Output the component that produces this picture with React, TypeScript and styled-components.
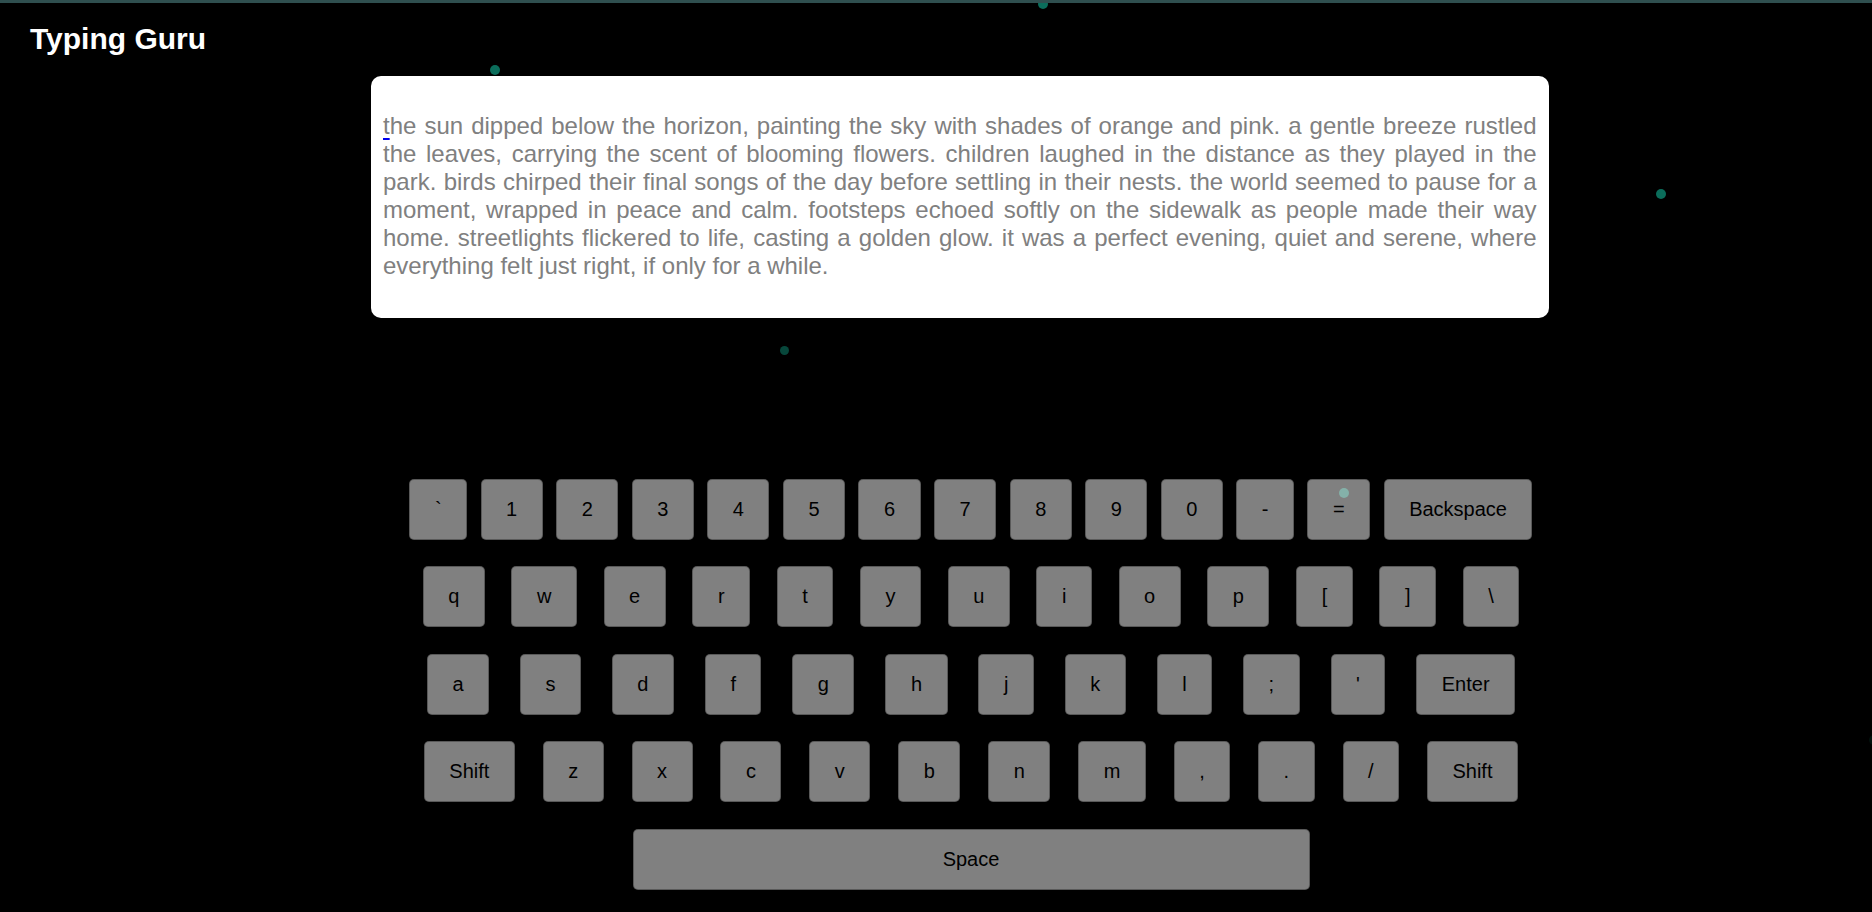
import React from "react";
import styled, { createGlobalStyle } from "styled-components";

const passage =
  "the sun dipped below the horizon, painting the sky with shades of orange and pink. a gentle breeze rustled the leaves, carrying the scent of blooming flowers. children laughed in the distance as they played in the park. birds chirped their final songs of the day before settling in their nests. the world seemed to pause for a moment, wrapped in peace and calm. footsteps echoed softly on the sidewalk as people made their way home. streetlights flickered to life, casting a golden glow. it was a perfect evening, quiet and serene, where everything felt just right, if only for a while.";

const rows: string[][] = [
  ["`", "1", "2", "3", "4", "5", "6", "7", "8", "9", "0", "-", "=", "Backspace"],
  ["q", "w", "e", "r", "t", "y", "u", "i", "o", "p", "[", "]", "\\"],
  ["a", "s", "d", "f", "g", "h", "j", "k", "l", ";", "'", "Enter"],
  ["Shift", "z", "x", "c", "v", "b", "n", "m", ",", ".", "/", "Shift"],
  ["Space"],
];

// background particles (x, y, size, opacity)
const particles = [
  { x: 495, y: 70, size: 10, op: 1 },
  { x: 1043, y: 4, size: 10, op: 1 },
  { x: 1661, y: 194, size: 10, op: 1 },
  { x: 784, y: 350, size: 9, op: 0.65 },
  { x: 1344, y: 493, size: 10, op: 0.9 },
  { x: 1874, y: 740, size: 10, op: 0.15 },
];

function App() {
  return (
    <Page>
      <GlobalStyle />
      <Particles>
        {particles.map((p, i) => (
          <Dot key={i} $x={p.x} $y={p.y} $size={p.size} $op={p.op} />
        ))}
      </Particles>
      <TopBar />
      <Header>
        <Title>Typing Guru</Title>
      </Header>
      <Main>
        <TextPanel>
          <Passage>
            <Cursor>{passage[0]}</Cursor>
            {passage.slice(1)}
          </Passage>
        </TextPanel>
        <Keyboard>
          {rows.map((row, r) => (
            <KeyRow key={r}>
              {row.map((k, i) => (
                <Key key={i} $space={k === "Space"}>
                  {k}
                </Key>
              ))}
            </KeyRow>
          ))}
        </Keyboard>
      </Main>
    </Page>
  );
}

export default App;

const GlobalStyle = createGlobalStyle`
  html, body {
    margin: 0;
    padding: 0;
    background: #000;
    overflow: hidden;
  }
  body {
    font-family: "Liberation Sans", Arial, sans-serif;
  }
`;

const Page = styled.div`
  position: relative;
  min-height: 912px;
  background: #000;
`;

const Particles = styled.div`
  position: absolute;
  inset: 0;
  z-index: 0;
  pointer-events: none;
  overflow: hidden;
`;

const Dot = styled.span<{ $x: number; $y: number; $size: number; $op: number }>`
  position: absolute;
  left: ${(p) => p.$x - p.$size / 2}px;
  top: ${(p) => p.$y - p.$size / 2}px;
  width: ${(p) => p.$size}px;
  height: ${(p) => p.$size}px;
  border-radius: 50%;
  background: #0b6d5b;
  opacity: ${(p) => p.$op};
  filter: blur(0.5px);
`;

const TopBar = styled.div`
  position: relative;
  z-index: 2;
  height: 3px;
  background: #2f4f4f;
`;

const Header = styled.header`
  position: relative;
  z-index: 1;
  padding: 19px 30px 20px;
`;

const Title = styled.h1`
  margin: 0;
  font-size: 30px;
  line-height: 34px;
  font-weight: bold;
  color: #fff;
`;

const Main = styled.main`
  position: relative;
  z-index: 1;
  display: flex;
  flex-direction: column;
  align-items: flex-start;
  padding-left: 371px;
`;

const TextPanel = styled.div`
  box-sizing: border-box;
  width: 1177.5px;
  padding: 12px 12px 13.5px;
  background: #fff;
  border-radius: 10px;
`;

const Passage = styled.p`
  margin: 24px 0;
  font-size: 24px;
  color: #808080;
  text-align: justify;
`;

const Cursor = styled.span`
  text-decoration: underline;
  text-decoration-color: #0000ee;
  text-decoration-thickness: 2px;
  text-underline-offset: 4px;
`;

const Keyboard = styled.div`
  display: flex;
  flex-direction: column;
  gap: 26.5px;
  width: 1150px;
  margin: 161px 0 0 25px;
`;

const KeyRow = styled.div`
  display: flex;
  justify-content: space-evenly;
`;

const Key = styled.div<{ $space?: boolean }>`
  box-sizing: border-box;
  display: flex;
  align-items: center;
  justify-content: center;
  height: 61px;
  width: ${(p) => (p.$space ? "677px" : "auto")};
  padding: 0 24.5px;
  background: rgba(255, 255, 255, 0.5);
  border: 1px solid rgba(0, 0, 0, 0.3);
  border-radius: 5px;
  font-size: 20px;
  line-height: 23px;
  color: #000;
`;
